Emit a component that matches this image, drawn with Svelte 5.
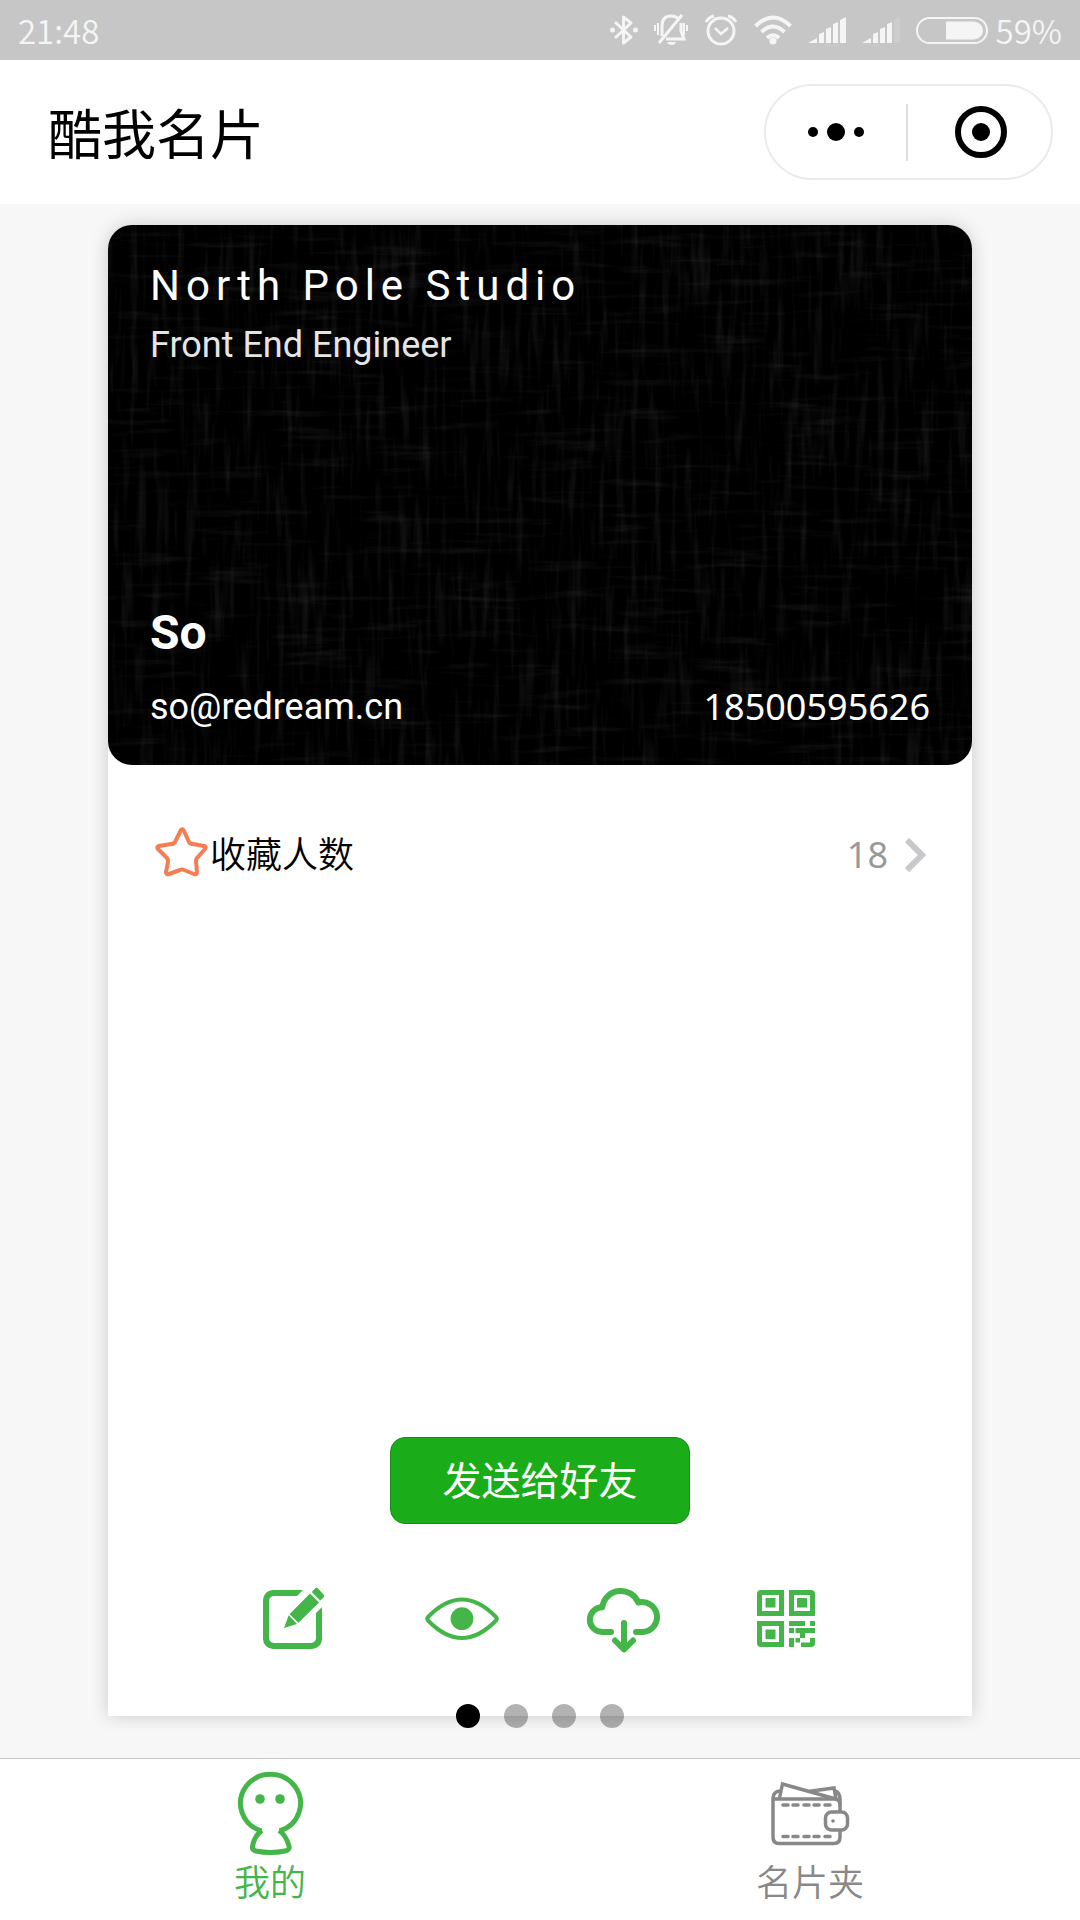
<script>
  let slide = $state(0);
  let tab = $state('mine');
  const slides = [0, 1, 2, 3];
  const dashes = [15, 25, 36, 46, 57];
</script>

<div class="app">
  <div class="status">
    <span>21:48</span>
    <div class="status-icons">
      <svg width="28" height="32" viewBox="0 0 28 32" fill="none" stroke="currentColor" stroke-width="3">
        <path d="M5 8 21 23 13.500 29V3L21 9 5 24" stroke-linejoin="round" />
        <circle cx="2.500" cy="16" r="2.500" fill="currentColor" stroke="none" />
        <circle cx="25.500" cy="16" r="2.500" fill="currentColor" stroke="none" />
      </svg>
      <svg width="34" height="32" viewBox="0 0 34 32" fill="none" stroke="currentColor" stroke-width="3">
        <path d="M8 22V12Q8 2 17 2 21 2 24 4M27 9v8l3 8H12M5 29 28 1" />
        <path d="M13 28h9q-1 3-4.500 3T13 28z" fill="currentColor" stroke="none" />
        <path d="M1 11v6M4 9v12M30 9v12M33 11v6" stroke-width="2" />
      </svg>
      <svg width="34" height="32" viewBox="0 0 34 32" fill="none" stroke="currentColor" stroke-width="3">
        <circle cx="17" cy="17" r="13" />
        <path d="m11 14 6 6 7-6" stroke-width="2.500" />
        <path d="M2 8q3-5 8-6M32 8q-3-5-8-6" />
      </svg>
      <svg width="38" height="32" viewBox="0 0 38 32" fill="none" stroke="currentColor" stroke-width="4">
        <path d="M1.500 12q17.500-17 35 0M7.500 18q11.500-11 23 0M13 24q6-5.500 12 0" />
        <circle cx="19" cy="27" r="3.500" fill="currentColor" stroke="none" />
      </svg>
      <svg width="38" height="32" viewBox="0 0 38 32" fill="currentColor">
        <path d="M0 29 9 24v5zM11 20l5-2v11h-5zM18 15l5-2v16h-5zM25 10l5-2v21h-5zM32 6l6-3v26h-6z" />
      </svg>
      <svg width="38" height="32" viewBox="0 0 38 32" fill="currentColor">
        <path d="M0 29 9 24v5zM11 20l5-2v11h-5zM18 15l5-2v16h-5zM25 10l5-2v21h-5z" />
        <path d="M32 6l6-3v26h-6z" opacity=".15" />
      </svg>
      <svg width="72" height="32" viewBox="0 0 72 32">
        <rect x="1" y="4" width="70" height="25" rx="12.500" fill="none" stroke="currentColor" stroke-width="2" />
        <path d="M30 7.500h28a9 9 0 0 1 0 18H30z" fill="currentColor" />
      </svg>
      <span>59%</span>
    </div>
  </div>

  <header>
    <h1>酷我名片</h1>
    <div class="capsule">
      <button aria-label="更多">
        <svg width="56" height="52" viewBox="0 0 56 52">
          <circle cx="5" cy="26" r="5" /><circle cx="28" cy="26" r="9" /><circle cx="51" cy="26" r="5" />
        </svg>
      </button>
      <i></i>
      <button class="close" aria-label="关闭">
        <svg width="52" height="52" viewBox="0 0 52 52">
          <circle cx="26" cy="26" r="23" fill="none" stroke="#000" stroke-width="6" />
          <circle cx="26" cy="26" r="9" />
        </svg>
      </button>
    </div>
  </header>

  <main>
    <section class="panel">
      <div class="card">
        <svg class="weave" aria-hidden="true">
          <filter id="weave-v" x="0" y="0" width="100%" height="100%">
            <feTurbulence type="fractalNoise" baseFrequency="0.13 0.012" numOctaves="3" seed="4" />
            <feColorMatrix values="0 0 0 0 1  0 0 0 0 1  0 0 0 0 1  .18 0 0 0 -.09" />
          </filter>
          <filter id="weave-h" x="0" y="0" width="100%" height="100%">
            <feTurbulence type="fractalNoise" baseFrequency="0.012 0.13" numOctaves="3" seed="9" />
            <feColorMatrix values="0 0 0 0 1  0 0 0 0 1  0 0 0 0 1  .18 0 0 0 -.1" />
          </filter>
          <rect width="100%" height="100%" filter="url(#weave-v)" />
          <rect width="100%" height="100%" filter="url(#weave-h)" />
        </svg>
        <div class="card-text">
          <div>
            <p class="company">North Pole Studio</p>
            <p class="role">Front End Engineer</p>
          </div>
          <div>
            <p class="name">So</p>
            <div class="contact">
              <span>so@redream.cn</span>
              <span class="phone">18500595626</span>
            </div>
          </div>
        </div>
      </div>

      <button class="favourites">
        <svg width="60" height="60" viewBox="0 0 60 60" fill="none" stroke="#f67d53" stroke-width="4" stroke-linejoin="round">
          <path d="M31 5Q32 3 34 6L39 17Q40 19 43 19L54 21Q57 22 55 24L47 33Q46 34 46 37L47 47Q47 50 44 49L34 45Q32 44 30 45L19 49Q16 50 16 47L18 37Q18 34 17 33L8 24Q6 22 9 21L21 19Q24 19 25 17Z" />
        </svg>
        <span class="label">收藏人数</span>
        <span class="count">18</span>
        <svg width="21" height="34" viewBox="0 0 21 34" fill="none" stroke="#c7c7cc" stroke-width="6">
          <path d="m2 2 15 15L2 32" />
        </svg>
      </button>

      <button class="send">发送给好友</button>

      <div class="actions">
        <button aria-label="编辑">
          <svg width="80" height="80" viewBox="0 0 80 80">
            <path d="M46 11H16A10 10 0 0 0 6 21V60A10 10 0 0 0 16 70H55A10 10 0 0 0 65 60V28L59 34V59A5 5 0 0 1 54 64H17A5 5 0 0 1 12 59V22A5 5 0 0 1 17 17H40z" />
            <path d="M27 49 31.700 36.300 40 45zM32.500 35.300 53 14.500 62 23.500 41.500 43.800zM54.800 13 58 9.500Q59.500 8 61 9.500L66.500 15.500Q68 17 66.500 18.500L63.200 21.500z" />
          </svg>
        </button>
        <button aria-label="预览">
          <svg width="80" height="80" viewBox="0 0 80 80">
            <path d="M9 38Q26 20.500 43 20.500T77 38Q78.500 39.700 77 41.500Q60 59 43 59T9 41.500Q7.500 39.700 9 38z" fill="none" stroke="currentColor" stroke-width="4" />
            <circle cx="43" cy="39.700" r="11.400" />
          </svg>
        </button>
        <button aria-label="下载">
          <svg width="80" height="80" viewBox="0 0 80 80" fill="none" stroke="currentColor" stroke-width="6" stroke-linecap="round" stroke-linejoin="round">
            <path d="M30 53H21A12 12 0 0 1 21.300 28.300A18.800 18.800 0 0 1 57.300 23.500A15 15 0 1 1 62 53H55M43 44V70M34 61.500 43 70.500 52 61.500" />
          </svg>
        </button>
        <button aria-label="二维码">
          <svg width="80" height="80" viewBox="0 0 80 80" fill-rule="evenodd">
            <path d="M18 11H41V37H14V15Q14 11 18 11zM19 16V32H36V16zM22.500 19H32.500V28.500H22.500z" />
            <path d="M46 11H68Q72 11 72 15V37H46zM51 16V32H67V16zM54 19H64V28.500H54z" />
            <path d="M14 42H41V68H18Q14 68 14 64zM19 47V63H36V47zM22.500 50.500H32.500V60H22.500z" />
            <path d="M46 42H62V47H46zM67 42H72V47H67zM46 49H51V54H46zM52.500 49H72V54H62V59H57V54H52.500zM46 59H51V68H46zM52.500 59H57V63.500H52.500zM67 59H72V64Q72 68 68 68H58V63.500H67z" />
          </svg>
        </button>
      </div>

      <div class="dots">
        {#each slides as n}
          <button class:on={slide === n} aria-label={`名片 ${n + 1}`} onclick={() => (slide = n)}></button>
        {/each}
      </div>
    </section>
  </main>

  <nav>
    <button class:active={tab === 'mine'} onclick={() => (tab = 'mine')}>
      <svg width="84" height="84" viewBox="0 0 84 84" fill="none" stroke="currentColor" stroke-width="5">
        <path d="M33.500 60A30 29 0 1 1 51.500 60M34 59.500Q26 65 24.500 76Q24 79 28 80Q42 83 57 80Q62 79 61 75Q58 64 51 59.500" />
        <circle cx="32" cy="28" r="4.800" fill="currentColor" stroke="none" />
        <circle cx="52" cy="28" r="4.800" fill="currentColor" stroke="none" />
      </svg>
      <span>我的</span>
    </button>
    <button class:active={tab === 'folder'} onclick={() => (tab = 'folder')}>
      <svg width="84" height="84" viewBox="0 0 84 84" fill="none" stroke="currentColor" stroke-width="3.500">
        <path d="M5 28H66Q72 28 72 34V66Q72 72.500 66 72.500H11Q5 72.500 5 66V27Q5.500 20 13 20" />
        <path d="M11.500 27 14.500 13 66 27.500M40 20.500 66 17 68 28M66 19.500Q72 21 72 28V34" />
        {#each dashes as x}
          <path d={`M${x} 34h5M${x} 65.500h5`} stroke-linecap="round" />
        {/each}
        <rect x="57.500" y="41" width="22" height="18" rx="6" fill="#fff" />
        <circle cx="65" cy="50" r="1.800" fill="currentColor" stroke="none" />
      </svg>
      <span>名片夹</span>
    </button>
  </nav>
</div>

<style>
  :global(body) {
    margin: 0;
    background: #f7f7f7;
  }
  .app {
    min-height: 100vh;
    display: flex;
    flex-direction: column;
    font-family: Roboto, "Noto Sans CJK SC", sans-serif;
    color: #000;
  }
  button {
    margin: 0;
    padding: 0;
    border: 0;
    background: none;
    font: inherit;
    color: inherit;
    cursor: pointer;
  }
  svg {
    display: block;
    flex: none;
  }
  p,
  h1 {
    margin: 0;
  }
  .status {
    height: 60px;
    padding: 0 18px;
    display: flex;
    align-items: center;
    justify-content: space-between;
    background: #c6c6c6;
    color: #f5f5f5;
    font: 350 33px/58px "Noto Sans CJK SC", sans-serif;
  }
  .status-icons {
    display: flex;
    align-items: center;
    gap: 16px;
  }
  .status-icons span {
    margin-left: -8px;
  }
  header {
    height: 144px;
    box-sizing: border-box;
    padding: 0 27px 0 48px;
    display: flex;
    align-items: center;
    justify-content: space-between;
    background: #fff;
  }
  h1 {
    font: 400 54px/72px "Noto Sans CJK SC", sans-serif;
  }
  .capsule {
    width: 289px;
    height: 96px;
    box-sizing: border-box;
    display: flex;
    align-items: center;
    border: 2px solid #ebebeb;
    border-radius: 48px;
  }
  .capsule button {
    flex: 1;
    height: 100%;
    display: grid;
    place-items: center;
  }
  .capsule .close {
    padding-left: 4px;
  }
  .capsule i {
    width: 2px;
    height: 57px;
    background: #dedede;
  }
  main {
    flex: 1;
    display: flex;
    padding: 21px 10% 42px;
  }
  .panel {
    position: relative;
    flex: 1;
    display: flex;
    flex-direction: column;
    align-items: center;
    background: #fff;
    border-radius: 24px 24px 0 0;
    box-shadow: 0 0 18px rgba(0, 0, 0, 0.18);
  }
  .card {
    position: relative;
    width: 100%;
    aspect-ratio: 8 / 5;
    display: flex;
    overflow: hidden;
    border-radius: 24px;
    background: #000;
    color: #fff;
  }
  .weave {
    position: absolute;
    inset: 0;
    width: 100%;
    height: 100%;
  }
  .card-text {
    position: relative;
    flex: 1;
    display: flex;
    flex-direction: column;
    justify-content: space-between;
    padding: 31px 42px 32px;
    font-size: 36px;
    line-height: 52px;
  }
  .company {
    font-size: 42px;
    line-height: 60px;
    letter-spacing: 6px;
    margin-bottom: 3px;
  }
  .role {
    color: #e5e5e5;
  }
  .name {
    font-size: 48px;
    font-weight: 700;
    line-height: 60px;
    margin-bottom: 18px;
  }
  .contact {
    display: flex;
    justify-content: space-between;
  }
  .phone,
  .count {
    font-family: "Noto Sans", sans-serif;
  }
  .favourites {
    align-self: stretch;
    display: flex;
    align-items: center;
    margin-top: 57px;
    padding: 0 46px 0 42px;
    font-family: "Noto Sans CJK SC", sans-serif;
    font-weight: 350;
    font-size: 36px;
    line-height: 60px;
    text-align: left;
  }
  .label {
    padding-bottom: 5px;
  }
  .count {
    margin-left: auto;
    margin-right: 17px;
    color: #999;
    font-weight: 400;
  }
  .send {
    width: 300px;
    height: 87px;
    box-sizing: border-box;
    margin-top: auto;
    padding-bottom: 5px;
    border: 1px solid #188a18;
    border-radius: 15px;
    background: #1aad19;
    color: #fff;
    font-family: "Noto Sans CJK SC", sans-serif;
    font-size: 39px;
    line-height: 60px;
    font-weight: 400;
  }
  .actions {
    width: 75%;
    display: flex;
    margin: 55px 0 57px;
    color: #44b549;
  }
  .actions button {
    flex: 1;
    display: grid;
    place-items: center;
  }
  .actions svg:not([fill]) {
    fill: currentColor;
  }
  .dots {
    position: absolute;
    bottom: -12px;
    display: flex;
    gap: 24px;
  }
  .dots button {
    width: 24px;
    height: 24px;
    border-radius: 50%;
    background: rgba(0, 0, 0, 0.3);
  }
  .dots button.on {
    background: #000;
  }
  nav {
    display: flex;
    border-top: 1px solid #c8c8c8;
    background: #fff;
  }
  nav button {
    flex: 1;
    display: flex;
    flex-direction: column;
    align-items: center;
    padding: 12px 0 15px;
    color: #888;
    font-family: "Noto Sans CJK SC", sans-serif;
    font-weight: 350;
    font-size: 36px;
    line-height: 50px;
  }
  nav button.active {
    color: #44b549;
  }
</style>
